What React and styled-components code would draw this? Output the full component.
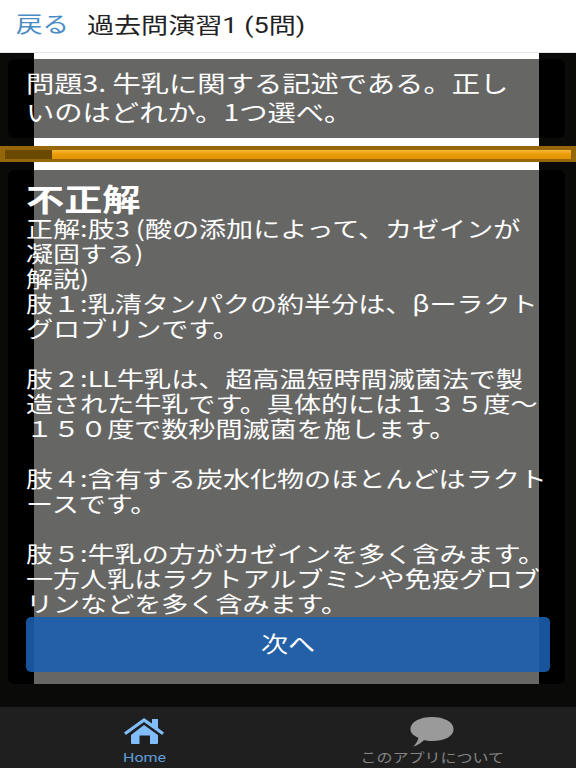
import React from "react";
import styled, { createGlobalStyle, css } from "styled-components";

const Global = createGlobalStyle`
  html, body { margin: 0; padding: 0; background: #0a0a08; }
  body { font-family: "Noto Sans CJK JP", "Noto Sans", sans-serif; }
`;

const stretched = css`
  transform: scaleX(1.23);
  transform-origin: left center;
`;

const Screen = styled.div`
  width: 576px;
  height: 768px;
  display: flex;
  flex-direction: column;
  overflow: hidden;
  position: relative;
`;

const Header = styled.header`
  height: 52px;
  flex: none;
  display: flex;
  align-items: center;
  padding-left: 16px;
  background: #fff;
  border-bottom: 1px solid #e4e4e4;
`;

const BackLink = styled.a`
  width: 71px;
  flex: none;
  font-size: 21.5px;
  line-height: 1;
  color: #4a8bc6;
  position: relative;
  top: -3px;
  ${stretched}
`;

const Title = styled.h1`
  margin: 0;
  font-size: 22px;
  line-height: 1;
  font-weight: 400;
  color: #222;
  font-family: "Roboto", "Noto Sans CJK JP", sans-serif;
  white-space: nowrap;
  ${stretched}
`;

const Band = styled.section`
  background-color: #0a0a08;
  background-image: linear-gradient(90deg, #0a0a08 34px, #fff 34px, #fff 539px, #0a0a08 539px);
  background-repeat: no-repeat;
  background-size: 100% ${(p) => (p.$grow ? "calc(100% - 23px)" : "100%")};
  padding: ${(p) => p.$pad};
  flex: ${(p) => (p.$grow ? "1" : "none")};
  display: flex;
  min-height: 0;
`;

const BlackPanel = styled.div`
  flex: 1;
  min-width: 0;
  background: #000;
  border-radius: 6px;
  padding: 0 26px;
  display: flex;
  min-height: 0;
`;

const GrayColumn = styled.div`
  flex: 1;
  background: #666765;
  color: #fff;
  min-width: 0;
`;

const Question = styled.p`
  margin: 0 0 0 -8px;
  height: 79px;
  padding-top: 9px;
  box-sizing: border-box;
  font-size: 23px;
  line-height: 29px;
  white-space: nowrap;
  ${stretched}
`;

const Progress = styled.div`
  height: 16px;
  flex: none;
  box-sizing: border-box;
  background: #96660a;
  padding: 4px 5px 3px;
  display: flex;
`;

const ProgressDone = styled.div`
  width: 47px;
  background: #6b4a00;
`;

const ProgressRest = styled.div`
  flex: 1;
  background: linear-gradient(180deg, #f7b93a 0%, #ec9c08 45%, #e09200 100%);
`;

const Answer = styled.div`
  margin-left: -8px;
  padding-top: 11px;
  white-space: nowrap;
  font-size: 22px;
  line-height: 25px;
  ${stretched}
`;

const Verdict = styled.h2`
  margin: 0;
  font-size: 31px;
  line-height: 34px;
  font-weight: 700;
`;

const Paragraph = styled.p`
  margin: 0 0 25px;
`;

const Footer = styled.nav`
  height: 61px;
  flex: none;
  background: #1f1f1f;
  display: grid;
  grid-template-columns: 288px 288px;
`;

const Tab = styled.div`
  display: flex;
  flex-direction: column;
  align-items: center;
  padding-top: 10px;
  color: ${(p) => p.$color};
  svg { display: block; height: 30px; margin-bottom: 3px; }
`;

const TabLabel = styled.span`
  font-size: 13px;
  line-height: 15px;
  font-family: "Roboto", "Noto Sans CJK JP", sans-serif;
  white-space: nowrap;
  transform: scaleX(1.23);
`;

const NextButton = styled.button`
  position: absolute;
  left: 26px;
  top: 617px;
  width: 524px;
  height: 55px;
  border: none;
  border-radius: 5px;
  background: rgba(26, 96, 176, 0.88);
  color: #fff;
  font: inherit;
  padding: 0 0 6px;
`;

const ButtonLabel = styled.span`
  display: inline-block;
  font-size: 22px;
  transform: scaleX(1.23);
`;

export default function App() {
  return (
    <Screen>
      <Global />
      <Header>
        <BackLink>戻る</BackLink>
        <Title>過去問演習1 (5問)</Title>
      </Header>
      <Band $pad="6px 11px 8px 8px">
        <BlackPanel>
          <GrayColumn>
            <Question>
              問題3. 牛乳に関する記述である。正し<br />いのはどれか。1つ選べ。
            </Question>
          </GrayColumn>
        </BlackPanel>
      </Band>
      <Progress>
        <ProgressDone />
        <ProgressRest />
      </Progress>
      <Band $grow $pad="8px 11px 23px 8px">
        <BlackPanel>
          <GrayColumn>
            <Answer>
              <Verdict>不正解</Verdict>
              <Paragraph>
                正解:肢3 (酸の添加によって、カゼインが<br />凝固する)<br />解説)<br />
                肢１:乳清タンパクの約半分は、βーラクト<br />グロブリンです。
              </Paragraph>
              <Paragraph>
                肢２:LL牛乳は、超高温短時間滅菌法で製<br />造された牛乳です。具体的には１３５度～<br />１５０度で数秒間滅菌を施します。
              </Paragraph>
              <Paragraph>
                肢４:含有する炭水化物のほとんどはラクト<br />ースです。
              </Paragraph>
              <Paragraph>
                肢５:牛乳の方がカゼインを多く含みます。<br />一方人乳はラクトアルブミンや免疫グロブ<br />リンなどを多く含みます。
              </Paragraph>
            </Answer>
          </GrayColumn>
        </BlackPanel>
      </Band>
      <Footer>
        <Tab $color="#5f9fdc">
          <svg viewBox="0 0 40 30" width="40" aria-hidden="true">
            <path d="M20 1 L28 6.5 V2 H34 V11 L40 15.5 L38.2 18 L20 5 L1.8 18 L0 15.5 Z" fill="#82bdfb" />
            <path d="M20 8 L34 18 V26 Q34 27 33 27 H26 V18.5 H15.5 V27 H8 Q7 27 7 26 V18 Z" fill="#82bdfb" />
          </svg>
          <TabLabel>Home</TabLabel>
        </Tab>
        <Tab $color="#858585">
          <svg viewBox="0 0 46 32" width="46" aria-hidden="true">
            <path d="M23 0 C35.5 0 46 5 46 13 C46 21 35.5 25.5 23 25.5 C20 25.5 17 25.2 14.5 24.5 C11 28 6 31 3 31.5 C5.5 29 8 25.5 8.5 22 C3.5 20 0 17 0 13 C0 5 10.5 0 23 0 Z" fill="#9a9a9a" />
          </svg>
          <TabLabel>このアプリについて</TabLabel>
        </Tab>
      </Footer>
      <NextButton><ButtonLabel>次へ</ButtonLabel></NextButton>
    </Screen>
  );
}
